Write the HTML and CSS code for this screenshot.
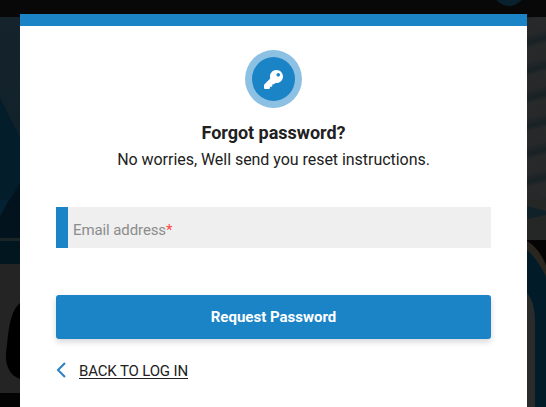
FILE: index.html
```
<!DOCTYPE html>
<html lang="en">

<head>
  <meta charset="UTF-8">
  <meta name="viewport" content="width=device-width, initial-scale=1.0">
  <title>Forgot password</title>

  <link rel="stylesheet" href="styles.css">
</head>

<body>

  <svg class="backdrop" width="546" height="407" viewBox="0 0 546 407">
    <defs>
      <linearGradient id="sky" x1="0" y1="0" x2="0" y2="1">
        <stop offset="0" stop-color="#15242c" />
        <stop offset="0.5" stop-color="#12222a" />
        <stop offset="1" stop-color="#041621" />
      </linearGradient>
      <linearGradient id="stripe" x1="527" y1="21" x2="534" y2="47" gradientUnits="userSpaceOnUse" spreadMethod="repeat">
        <stop offset="0" stop-color="#282a2a" />
        <stop offset="0.5" stop-color="#262829" />
        <stop offset="0.8" stop-color="#182125" />
        <stop offset="1" stop-color="#282a2a" />
      </linearGradient>
    </defs>
    <rect width="546" height="407" fill="#080808" />
    <circle cx="509" cy="-10" r="16" fill="#09202d" />

    <!-- left side -->
    <rect y="17" width="20" height="221" fill="url(#sky)" />
    <path d="M0 98 L20 137 V240 H0z" fill="#041d2b" />
    <path d="M0 200 H10 L20 183 V238 H0z" fill="#03131d" />
    <path d="M0 200 H9 L0 216z" fill="#052234" />
    <rect y="238" width="20" height="3" fill="#1b2526" />
    <rect y="241" width="20" height="23" fill="#02161f" />
    <rect y="264" width="20" height="129" fill="#242424" />
    <path d="M20 303 C12 310 10 321 8 335 L6 354 C5 367 11 376 20 379z" fill="#000" />
    <rect y="393" width="20" height="14" fill="#030303" />

    <!-- right side -->
    <rect x="527" y="17" width="19" height="185" fill="url(#stripe)" />
    <rect x="527" y="200" width="19" height="40" fill="#252727" />
    <path d="M527 206 L546 211 V215 L527 219z" fill="#10212a" />
    <rect x="527" y="240" width="19" height="167" fill="#040404" />
    <path d="M527 241 Q539 248 546 265 V407 H527z" fill="#292620" />
    <path d="M527 250 Q539 261 546 277 V407 H527z" fill="#021b29" />
    <path d="M527 293 Q535 302 535 323 V407 H527z" fill="#2a2c2c" />
  </svg>

  <div class="modal">
    <div class="key-icon">
      <svg width="19" height="19" viewBox="0 0 512 512">
        <path fill="#fff" d="M512 176c0 97-79 176-176 176-11 0-22-1-33-3l-24 27c-5 5-11 8-18 8h-37v40c0 13-11 24-24 24h-40v40c0 13-11 24-24 24H24c-13 0-24-11-24-24v-78c0-6 3-12 7-17l162-162c-6-17-9-36-9-55C160 79 239 0 336 0c98 0 176 79 176 176zM336 128c0 27 21 48 48 48s48-21 48-48-21-48-48-48-48 21-48 48z" />
      </svg>
    </div>

    <h1 class="title">Forgot password?</h1>
    <p class="sub-title">No worries, Well send you reset instructions.</p>

    <label class="email-field">Email address<span class="required">*</span></label>

    <button class="request-btn" type="button">Request Password</button>

    <div class="back">
      <svg width="10" height="16" viewBox="0 0 10 16">
        <path d="M9 1 L2 8 L9 15" fill="none" stroke="#2b7fc4" stroke-width="2" />
      </svg>
      <a class="back-link">BACK TO LOG IN</a>
    </div>
  </div>

</body>

</html>
```
FILE: styles.css
```
body {
  margin: 0;
  height: 407px;
  overflow: hidden;
  background-color: #080808;
  font-family: Roboto, "Liberation Sans", sans-serif;
  color: #212121;
}

/* dimmed page behind the modal */
.backdrop {
  position: absolute;
  top: 0;
  left: 0;
}

/* modal */
.modal {
  position: relative;
  box-sizing: border-box;
  width: 507px;
  height: 393px;
  margin: 14px 0 0 20px;
  padding: 24px 36px 0;
  border-top: 12px solid #1b84c7;
  background-color: white;
  text-align: center;
}

.key-icon {
  display: flex;
  align-items: center;
  justify-content: center;
  box-sizing: border-box;
  width: 57px;
  height: 58px;
  margin: 0 auto;
  border: 7px solid #8dc1e3;
  border-radius: 50%;
  background-color: #1b84c7;
}

.title {
  margin: 14px 0 0;
  font-size: 18px;
  line-height: 22px;
  font-weight: bold;
  letter-spacing: -0.03px;
}

.sub-title {
  margin: 4px 0 0;
  font-size: 16px;
  line-height: 24px;
  letter-spacing: -0.04px;
}

/* form */
.email-field {
  display: block;
  box-sizing: border-box;
  height: 41px;
  margin-top: 35px;
  padding-left: 5px;
  border-left: 12px solid #1b84c7;
  background-color: #efefef;
  font-size: 15px;
  line-height: 46px;
  letter-spacing: -0.1px;
  color: #8c8c8c;
  text-align: left;
}

.required {
  color: #ff4545;
}

.request-btn {
  display: block;
  width: 100%;
  height: 44px;
  margin-top: 47px;
  padding: 0;
  border: none;
  border-radius: 3px;
  background-color: #1b84c7;
  box-shadow: 0 3px 6px rgba(0, 0, 0, 0.16);
  font-family: inherit;
  font-size: 15px;
  font-weight: bold;
  color: white;
}

.back {
  display: flex;
  align-items: center;
  margin-top: 22px;
  gap: 13px;
}

.back-link {
  padding-top: 3px;
  border-bottom: 1px solid #212121;
  font-size: 15px;
  line-height: 14px;
  letter-spacing: -0.15px;
}
```
